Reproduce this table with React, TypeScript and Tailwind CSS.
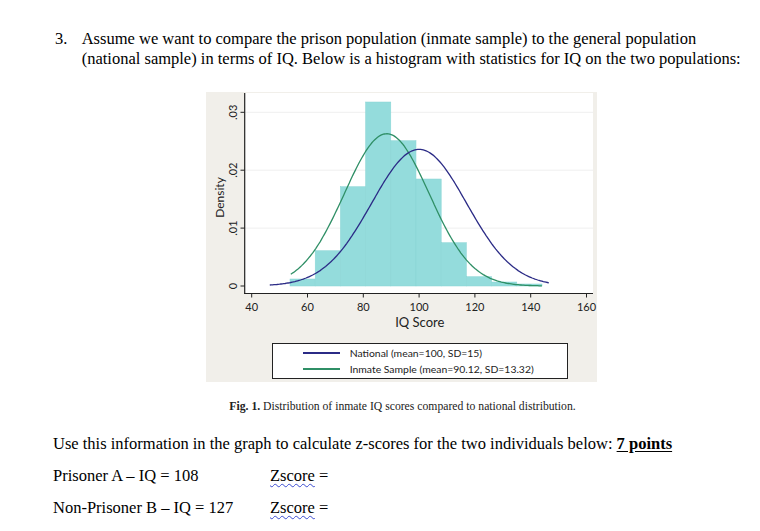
import React from 'react';

// histogram bins, tops in plot px (baseline at y=194)
const bars = [187, 158.7, 94.7, 10, 48.7, 87, 150.7, 184.7, 190, 192];
const BAR_X = 84;
const BAR_W = 25.2;

const xOf = (v: number) => 45.7 + (v - 40) * 2.79;
const yOf = (d: number) => 194 - d * 5790;

const curve = (mean: number, sd: number, peak: number, from: number, to: number) => {
  const pts: string[] = [];
  for (let v = from; v <= to + 0.001; v += 0.5) {
    const d = peak * Math.exp(-0.5 * ((v - mean) / sd) ** 2);
    pts.push(`${xOf(v).toFixed(1)},${yOf(d).toFixed(1)}`);
  }
  return pts.join(' ');
};

function Chart() {
  const yTicks = [
    { v: 0, label: '0' },
    { v: 0.01, label: '.01' },
    { v: 0.02, label: '.02' },
    { v: 0.03, label: '.03' },
  ];
  const xTicks = [40, 60, 80, 100, 120, 140, 160];

  return (
    <svg width="391" height="251" viewBox="0 0 391 251" className="block">
      <rect x="39" y="1" width="348" height="200.5" fill="#ffffff" />
      {yTicks.slice(1).map((t) => (
        <line key={t.v} x1="39" x2="387" y1={yOf(t.v)} y2={yOf(t.v)} stroke="#efefef" strokeWidth="1" />
      ))}
      {bars.map((top, i) => (
        <rect
          key={i}
          x={BAR_X + i * BAR_W}
          y={top}
          width={BAR_W}
          height={194 - top}
          fill="#94dcdc"
          stroke="#88d4d4"
          strokeWidth="0.5"
        />
      ))}
      <polyline points={curve(88.4, 15.2, 0.0263, 54, 144)} fill="none" stroke="#2f8f66" strokeWidth="1.3" />
      <polyline points={curve(100, 17, 0.0236, 46.5, 146.7)} fill="none" stroke="#2b2b86" strokeWidth="1.3" />

      {/* axes */}
      <line x1="38.7" x2="38.7" y1="1" y2="202" stroke="#222" strokeWidth="1.2" />
      <line x1="38.2" x2="387" y1="201.5" y2="201.5" stroke="#222" strokeWidth="1.2" />
      {yTicks.map((t) => (
        <g key={t.v}>
          <line x1="34.5" x2="38.7" y1={yOf(t.v)} y2={yOf(t.v)} stroke="#222" strokeWidth="1" />
          <text
            x="0"
            y="0"
            transform={`translate(31.3 ${yOf(t.v)}) rotate(-90)`}
            textAnchor="middle"
            fontSize="11"
            fill="#222"
            fontFamily="Lato, sans-serif"
          >
            {t.label}
          </text>
        </g>
      ))}
      {xTicks.map((v) => (
        <g key={v}>
          <line x1={xOf(v)} x2={xOf(v)} y1="201.5" y2="205.5" stroke="#222" strokeWidth="1" />
          <text x={xOf(v)} y="218.7" textAnchor="middle" fontSize="11" fill="#222" fontFamily="Lato, sans-serif">
            {v}
          </text>
        </g>
      ))}
      <text
        transform="translate(17.5 105.5) rotate(-90)"
        textAnchor="middle"
        fontSize="12"
        fill="#222"
        fontFamily="Lato, sans-serif"
      >
        Density
      </text>
      <text x="213.8" y="234.7" textAnchor="middle" fontSize="13" fill="#222" fontFamily="Lato, sans-serif">
        IQ Score
      </text>
    </svg>
  );
}

function LegendRow({ color, label }: { color: string; label: string }) {
  return (
    <div className="flex items-center h-[16px]">
      <span className="ml-[30px] w-[37px] h-[1.2px]" style={{ background: color }} />
      <span className="ml-[10px] text-[10.4px] text-[#222] leading-none">{label}</span>
    </div>
  );
}

export default function App() {
  return (
    <div className="w-[760px] h-[531px] bg-white text-black font-['Liberation_Serif',serif] overflow-hidden">
      <div className="flex pl-[55px] pt-[28.5px] text-[16.5px] leading-[20.5px]">
        <span className="w-[26.7px] shrink-0">3.</span>
        <p>
          Assume we want to compare the prison population (inmate sample) to the general population
          <br />
          (national sample) in terms of IQ. Below is a histogram with statistics for IQ on the two populations:
        </p>
      </div>

      <div className="ml-[206px] mt-[22.5px] w-[391px] h-[290px] bg-[#f1efea] flex flex-col">
        <Chart />
        <div className="ml-[65.7px] w-[296px] h-[36px] border-[1.5px] border-[#222] bg-white flex flex-col justify-center font-['Lato',sans-serif]">
          <LegendRow color="#2b2b86" label="National (mean=100, SD=15)" />
          <LegendRow color="#2f8f66" label="Inmate Sample (mean=90.12, SD=13.32)" />
        </div>
      </div>

      <p className="mt-[17.7px] ml-[206px] w-[393px] text-center text-[11.7px] leading-[14px] text-[#222]">
        <span className="font-bold">Fig. 1.</span> Distribution of inmate IQ scores compared to national distribution.
      </p>

      <div className="mt-[14.6px] pl-[53px] text-[16.5px] leading-[32px]">
        <p>
          Use this information in the graph to calculate z-scores for the two individuals below:{' '}
          <span className="font-bold underline underline-offset-2">7 points</span>
        </p>
        <div className="flex">
          <span className="w-[217px]">Prisoner A – IQ = 108</span>
          <span>
            <span className="underline decoration-wavy decoration-[#3b4bd0] decoration-1 underline-offset-2">Zscore</span> =
          </span>
        </div>
        <div className="flex">
          <span className="w-[217px]">Non-Prisoner B – IQ = 127</span>
          <span>
            <span className="underline decoration-wavy decoration-[#3b4bd0] decoration-1 underline-offset-2">Zscore</span> =
          </span>
        </div>
      </div>
    </div>
  );
}
